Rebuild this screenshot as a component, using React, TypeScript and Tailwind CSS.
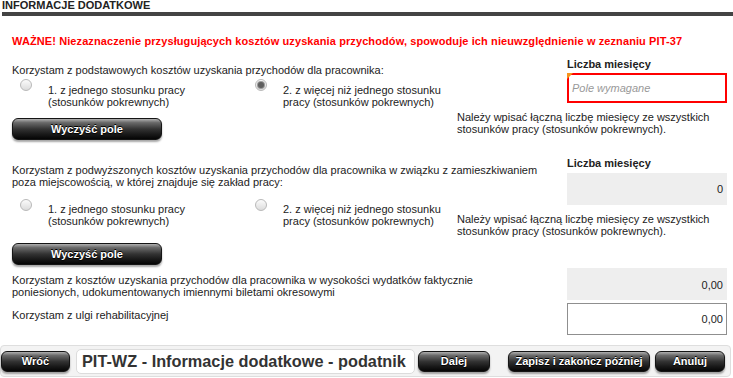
import React from "react";

function Btn({ children, className }: { children: React.ReactNode; className: string }) {
  return (
    <button
      type="button"
      className={
        "flex shrink-0 items-center justify-center rounded-[6px] border border-[#151515] bg-[linear-gradient(to_bottom,#b0b0b0_0%,#6a6a6a_18%,#333333_50%,#1a1a1a_75%,#050505_100%)] text-[11px] font-bold leading-[12px] text-white shadow-[0_2px_2px_rgba(0,0,0,0.35)] [text-shadow:0_-1px_0_#000,0_1px_1px_#000] " +
        className
      }
    >
      {children}
    </button>
  );
}

function Radio({ checked }: { checked?: boolean }) {
  return (
    <span className="flex h-[12px] w-[12px] shrink-0 items-center justify-center rounded-full border border-[#b9b9b9] bg-[linear-gradient(to_bottom,#fbfbfb,#dcdcdc)]">
      {checked && <span className="h-[6px] w-[6px] rounded-full bg-[#5f5f5f] shadow-[0_0_0_1px_#9a9a9a]" />}
    </span>
  );
}

function Option({
  checked,
  children,
  pt,
}: {
  checked?: boolean;
  children: React.ReactNode;
  pt: string;
}) {
  return (
    <div className="flex w-[235px] items-start">
      <Radio checked={checked} />
      <div className={"ml-[16px] " + pt}>{children}</div>
    </div>
  );
}

export default function App() {
  return (
    <div className="h-[378px] w-[733px] overflow-hidden bg-white font-['Liberation_Sans',Arial,sans-serif] text-[11px] leading-[12px] text-[#222]">
      <div className="h-[12px] pl-[2px] text-[11px] font-bold leading-[10px] text-[#222]">
        INFORMACJE DODATKOWE
      </div>
      <div className="ml-[2px] h-[4px] bg-[#444]" />

      <div className="mt-[19px] pl-[12px] font-bold tracking-[0.1px] text-[#ff0000]">
        WAŻNE! Niezaznaczenie przysługujących kosztów uzyskania przychodów, spowoduje ich nieuwzględnienie w
        zeznaniu PIT-37
      </div>

      {/* Section 1 */}
      <div className="mt-[11px] flex pl-[12px]">
        <div className="w-[555px] pt-[6px]">
          <div>Korzystam z podstawowych kosztów uzyskania przychodów dla pracownika:</div>
          <div className="mt-[3px] flex pl-[8px]">
            <Option pt="pt-[5px]">
              1. z jednego stosunku pracy
              <br />
              (stosunków pokrewnych)
            </Option>
            <Option checked pt="pt-[5px]">
              2. z więcej niż jednego stosunku
              <br />
              pracy (stosunków pokrewnych)
            </Option>
          </div>
          <Btn className="mt-[10px] h-[22px] w-[150px]">Wyczyść pole</Btn>
        </div>
        <div className="w-[160px] shrink-0">
          <div className="font-bold">Liczba miesięcy</div>
          <div className="relative mt-[3px] h-[30px] border-2 border-[#ff0000] bg-white pl-[3px] leading-[26px]">
            <span className="italic text-[#999]">Pole wymagane</span>
            <span className="absolute left-[-2px] top-[-2px] h-0 w-0 border-r-[6px] border-t-[6px] border-r-transparent border-t-[#f7941d]" />
          </div>
          <div className="-ml-[110px] mt-[8px] w-[270px]">
            Należy wpisać łączną liczbę miesięcy ze wszystkich
            <br />
            stosunków pracy (stosunków pokrewnych).
          </div>
        </div>
      </div>

      {/* Section 2 */}
      <div className="mt-[17px] flex pl-[12px]">
        <div className="w-[555px] pt-[7px]">
          <div>
            Korzystam z podwyższonych kosztów uzyskania przychodów dla pracownika w związku z zamieszkiwaniem
            <br />
            poza miejscowością, w której znajduje się zakład pracy:
          </div>
          <div className="mt-[11px] flex pl-[8px]">
            <Option pt="pt-[4px]">
              1. z jednego stosunku pracy
              <br />
              (stosunków pokrewnych)
            </Option>
            <Option pt="pt-[4px]">
              2. z więcej niż jednego stosunku
              <br />
              pracy (stosunków pokrewnych)
            </Option>
          </div>
          <Btn className="mt-[16px] h-[22px] w-[150px]">Wyczyść pole</Btn>
        </div>
        <div className="w-[160px] shrink-0">
          <div className="font-bold">Liczba miesięcy</div>
          <div className="mt-[4px] h-[32px] bg-[#eeeeee] pr-[4px] text-right leading-[32px]">0</div>
          <div className="-ml-[110px] mt-[8px] w-[270px]">
            Należy wpisać łączną liczbę miesięcy ze wszystkich
            <br />
            stosunków pracy (stosunków pokrewnych).
          </div>
        </div>
      </div>

      {/* Section 3 */}
      <div className="mt-[3px] flex pl-[12px]">
        <div className="w-[555px] pt-[6px]">
          Korzystam z kosztów uzyskania przychodów dla pracownika w wysokości wydatków faktycznie
          <br />
          poniesionych, udokumentowanych imiennymi biletami okresowymi
        </div>
        <div className="h-[32px] w-[160px] shrink-0 bg-[#eeeeee] pr-[4px] pt-[1px] text-right leading-[32px]">
          0,00
        </div>
      </div>
      <div className="mt-[3px] flex pl-[12px]">
        <div className="w-[555px] pt-[6px]">Korzystam z ulgi rehabilitacyjnej</div>
        <div className="h-[32px] w-[160px] shrink-0 border border-[#8f8f8f] bg-white pr-[3px] text-right leading-[30px]">
          0,00
        </div>
      </div>

      {/* Bottom bar */}
      <div className="mt-[10px] flex h-[32px] w-[731px] items-center rounded-[4px] border border-[#dedede] bg-[#f3f3f3]">
        <Btn className="h-[21px] w-[69px]">Wróć</Btn>
        <div className="ml-[6px] h-[25px] w-[339px] shrink-0 rounded-[5px] border border-[#dcdcdc] bg-white pl-[5px] text-[16.3px] font-bold leading-[23px] text-[#333]">
          PIT-WZ - Informacje dodatkowe - podatnik
        </div>
        <Btn className="ml-[3px] h-[21px] w-[72px]">Dalej</Btn>
        <Btn className="ml-[18px] h-[21px] w-[142px]">Zapisz i zakończ później</Btn>
        <Btn className="ml-[5px] h-[21px] w-[70px]">Anuluj</Btn>
      </div>
    </div>
  );
}
